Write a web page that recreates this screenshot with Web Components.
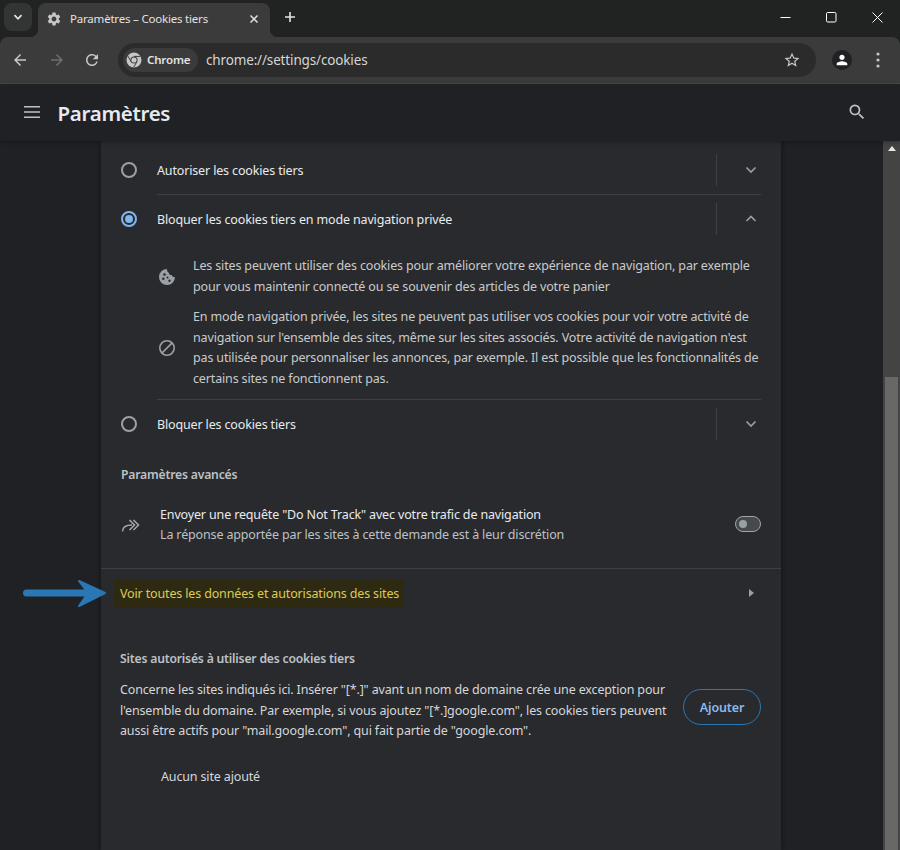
<!DOCTYPE html>
<html lang="fr">
<head>
<meta charset="utf-8">
<title>Paramètres – Cookies tiers</title>
<style>
    html, body {
        margin: 0;
        height: 850px;
        overflow: hidden;
        background: #202124;
        font-family: "Noto Sans", "Open Sans", sans-serif;
        font-size: 12.5px;
        letter-spacing: -0.15px;
    }
    body { display: flex; flex-direction: column; }
    settings-page { flex: 1; min-height: 0; }
</style>
</head>
<body>
<browser-tabstrip></browser-tabstrip>
<browser-toolbar></browser-toolbar>
<settings-header></settings-header>
<settings-page>
    <cookie-option label="Autoriser les cookies tiers"></cookie-option>
    <cookie-option label="Bloquer les cookies tiers en mode navigation privée" checked open>
        <info-row icon="cookie">Les sites peuvent utiliser des cookies pour améliorer votre expérience de navigation, par exemple pour vous maintenir connecté ou se souvenir des articles de votre panier</info-row>
        <info-row icon="block">En mode navigation privée, les sites ne peuvent pas utiliser vos cookies pour voir votre activité de navigation sur l'ensemble des sites, même sur les sites associés. Votre activité de navigation n'est pas utilisée pour personnaliser les annonces, par exemple. Il est possible que les fonctionnalités de certains sites ne fonctionnent pas.</info-row>
    </cookie-option>
    <cookie-option label="Bloquer les cookies tiers" last></cookie-option>
    <section-title style="margin-top:14.6px">Paramètres avancés</section-title>
    <dnt-row></dnt-row>
    <site-data-link></site-data-link>
    <allowed-sites></allowed-sites>
</settings-page>

<script>
const ICONS = {
    gear: 'M19.14 12.94c.04-.3.06-.61.06-.94 0-.32-.02-.64-.07-.94l2.03-1.58c.18-.14.23-.41.12-.61l-1.92-3.32c-.12-.22-.37-.29-.59-.22l-2.39.96c-.5-.38-1.03-.7-1.62-.94l-.36-2.54c-.04-.24-.24-.41-.48-.41h-3.84c-.24 0-.43.17-.47.41l-.36 2.54c-.59.24-1.13.57-1.62.94l-2.39-.96c-.22-.08-.47 0-.59.22L2.74 8.87c-.12.21-.08.47.12.61l2.03 1.58c-.05.3-.09.63-.09.94s.02.64.07.94l-2.03 1.58c-.18.14-.23.41-.12.61l1.92 3.32c.12.22.37.29.59.22l2.39-.96c.5.38 1.03.7 1.62.94l.36 2.54c.05.24.24.41.48.41h3.84c.24 0 .44-.17.47-.41l.36-2.54c.59-.24 1.13-.56 1.62-.94l2.39.96c.22.08.47 0 .59-.22l1.92-3.32c.12-.22.07-.47-.12-.61l-2.01-1.58zM12 15.6c-1.98 0-3.6-1.62-3.6-3.6s1.62-3.6 3.6-3.6 3.6 1.62 3.6 3.6-1.62 3.6-3.6 3.6z',
    search: 'M15.5 14h-.79l-.28-.27A6.471 6.471 0 0 0 16 9.5 6.5 6.5 0 1 0 9.5 16c1.61 0 3.09-.59 4.23-1.57l.27.28v.79l5 4.99L20.49 19l-4.99-5zm-6 0C7.01 14 5 11.99 5 9.5S7.01 5 9.5 5 14 7.01 14 9.5 11.99 14 9.5 14z',
    star: 'M22 9.24l-7.19-.62L12 2 9.19 8.63 2 9.24l5.46 4.73L5.82 21 12 17.27 18.18 21l-1.63-7.03L22 9.24zM12 15.4l-3.76 2.27 1-4.28-3.32-2.88 4.38-.38L12 6.1l1.71 4.04 4.38.38-3.32 2.88 1 4.28L12 15.4z',
    person: 'M12 12c2.21 0 4-1.79 4-4s-1.79-4-4-4-4 1.79-4 4 1.79 4 4 4zm0 2c-2.67 0-8 1.34-8 4v2h16v-2c0-2.66-5.33-4-8-4z',
    reload: 'M17.65 6.35A7.958 7.958 0 0 0 12 4c-4.42 0-7.99 3.58-7.99 8s3.57 8 7.99 8c3.73 0 6.84-2.55 7.73-6h-2.08A5.99 5.99 0 0 1 12 18c-3.31 0-6-2.69-6-6s2.69-6 6-6c1.66 0 3.14.69 4.22 1.78L13 11h7V4l-2.35 2.35z',
    arrow: 'M20 11H7.83l5.59-5.59L12 4l-8 8 8 8 1.41-1.41L7.83 13H20v-2z'
};

function icon(name, size, color, extra = '') {
    return `<svg width="${size}" height="${size}" viewBox="0 0 24 24" fill="${color}" style="display:block;flex:none;${extra}"><path d="${ICONS[name]}"/></svg>`;
}

class BrowserTabstrip extends HTMLElement {
    constructor() {
        super();
        this.attachShadow({ mode: 'open' });
        this.shadowRoot.innerHTML = `
            <style>
                :host { display: flex; height: 37px; background: #212322; padding-left: 4px; box-sizing: border-box; flex: none; }
                #list {
                    width: 28px; height: 28px; margin-top: 3px; border-radius: 8px; background: #333534;
                    display: flex; align-items: center; justify-content: center;
                }
                #tab {
                    position: relative; width: 232px; height: 34px; margin: 3px 0 0 6px; background: #3b3b3b;
                    border-radius: 8px 8px 0 0; display: flex; align-items: center; box-sizing: border-box;
                    padding: 0 11px 3px 8px; color: #e3e3e3; font-size: 11.5px; letter-spacing: -0.2px;
                }
                #tab::before, #tab::after { content: ''; position: absolute; bottom: 0; width: 8px; height: 8px; }
                #tab::before { left: -8px; background: radial-gradient(circle at 0 0, transparent 8px, #3b3b3b 8.5px); }
                #tab::after { right: -8px; background: radial-gradient(circle at 100% 0, transparent 8px, #3b3b3b 8.5px); }
                #title { margin-left: 8px; flex: 1; white-space: nowrap; }
                #plus { margin: 10px 0 0 13px; height: 14px; }
                #win { margin-left: auto; display: flex; }
                #win span { width: 46px; height: 34px; display: flex; align-items: center; justify-content: center; }
            </style>
            <div id="list">
                <svg width="10" height="10" viewBox="0 0 10 10" fill="none" stroke="#e3e3e3" stroke-width="1.7"><path d="M1.5 3.2 5 6.8l3.5-3.6"/></svg>
            </div>
            <div id="tab">
                ${icon('gear', 16, '#c7c7c7')}
                <span id="title">Paramètres – Cookies tiers</span>
                <svg width="10" height="10" viewBox="0 0 10 10" stroke="#e3e3e3" stroke-width="1.5"><path d="M1.5 1.5l7 7M8.5 1.5l-7 7"/></svg>
            </div>
            <svg id="plus" width="14" height="14" viewBox="0 0 14 14" stroke="#e3e3e3" stroke-width="1.6"><path d="M7 2v10M2 7h10"/></svg>
            <div id="win">
                <span><svg width="11" height="11" viewBox="0 0 11 11" stroke="#fff"><path d="M.5 5.5h10"/></svg></span>
                <span><svg width="11" height="11" viewBox="0 0 11 11" fill="none" stroke="#fff"><rect x=".5" y=".5" width="9.5" height="9.5" rx="1.2"/></svg></span>
                <span><svg width="11" height="11" viewBox="0 0 11 11" stroke="#fff"><path d="M.5.5l10 10M10.5.5l-10 10"/></svg></span>
            </div>
        `;
    }
}
customElements.define('browser-tabstrip', BrowserTabstrip);

class BrowserToolbar extends HTMLElement {
    constructor() {
        super();
        this.attachShadow({ mode: 'open' });
        this.shadowRoot.innerHTML = `
            <style>
                :host {
                    display: flex; align-items: center; height: 47px; box-sizing: border-box; flex: none;
                    background: #3b3b3b; border-bottom: 1px solid #4b4b4b; border-radius: 8px 8px 0 0; padding: 0 0 1px 11px;
                }
                #omni {
                    width: 698px; height: 34px; margin-left: 17px; border-radius: 17px; background: #2b2b2b;
                    display: flex; align-items: center; box-sizing: border-box; padding: 0 15px 0 5px;
                    color: #d5d5d5; font-size: 13.5px;
                }
                #chip {
                    width: 75px; height: 24px; border-radius: 12px; background: #3b3b3b; display: flex; align-items: center;
                    box-sizing: border-box; padding-left: 3px; gap: 5px; color: #e3e3e3; font-size: 11.5px; font-weight: 600;
                }
                #url { margin-left: 8px; flex: 1; }
                #avatar {
                    width: 20px; height: 20px; border-radius: 50%; background: #202124; margin-left: 16px;
                    display: flex; align-items: center; justify-content: center;
                }
                #dots { margin-left: 24px; }
            </style>
            ${icon('arrow', 18, '#c7c7c7')}
            ${icon('arrow', 18, '#6f6f6f', 'transform:scaleX(-1);margin-left:19px')}
            ${icon('reload', 18, '#c7c7c7', 'margin-left:17px')}
            <div id="omni">
                <div id="chip">
                    <svg width="16" height="16" viewBox="0 0 16 16" style="flex:none">
                        <circle cx="8" cy="8" r="7.5" fill="#c7c7c7"/>
                        <path d="M8 4.4h6.4M10.9 9.7l-3.2 5.6M5.1 9.7 1.9 4.1" stroke="#3b3b3b" stroke-width="1"/>
                        <circle cx="8" cy="8" r="3.6" fill="#3b3b3b"/>
                        <circle cx="8" cy="8" r="2.6" fill="#c7c7c7"/>
                    </svg>
                    <span>Chrome</span>
                </div>
                <span id="url">chrome://settings/cookies</span>
                ${icon('star', 18, '#c7c7c7')}
            </div>
            <div id="avatar">${icon('person', 16, '#fff')}</div>
            <svg id="dots" width="4" height="16" viewBox="0 0 4 16" fill="#c7c7c7"><circle cx="2" cy="2" r="1.6"/><circle cx="2" cy="8" r="1.6"/><circle cx="2" cy="14" r="1.6"/></svg>
        `;
    }
}
customElements.define('browser-toolbar', BrowserToolbar);

class SettingsHeader extends HTMLElement {
    constructor() {
        super();
        this.attachShadow({ mode: 'open' });
        this.shadowRoot.innerHTML = `
            <style>
                :host {
                    display: flex; align-items: center; height: 57px; background: #202124; box-sizing: border-box; flex: none;
                    padding: 0 33px 1px 24px; position: relative; z-index: 1; box-shadow: 0 1px 4px rgba(0,0,0,.35);
                }
                h1 { margin: 2px 0 0 17.5px; font-size: 20.5px; font-weight: 600; letter-spacing: -0.3px; color: #e8eaed; flex: 1; }
            </style>
            <svg width="16" height="12" viewBox="0 0 16 12" fill="#bdc1c6"><path d="M0 0h16v1.6H0zM0 5.2h16v1.6H0zM0 10.4h16V12H0z"/></svg>
            <h1>Paramètres</h1>
            ${icon('search', 20, '#bdc1c6')}
        `;
    }
}
customElements.define('settings-header', SettingsHeader);

class SettingsPage extends HTMLElement {
    constructor() {
        super();
        this.attachShadow({ mode: 'open' });
        this.shadowRoot.innerHTML = `
            <style>
                :host { display: flex; background: #202124; height: 100%; overflow: hidden; }
                #main { flex: 1; padding-left: 101px; min-width: 0; }
                #card {
                    width: 680px; height: 100%; box-sizing: border-box; background: #292a2d; padding-top: 5px;
                    box-shadow: 0 0 5px rgba(0,0,0,.45);
                }
                #bar { width: 17px; background: #444; position: relative; flex: none; display: flex; flex-direction: column; align-items: center; }
                #up { margin-top: 5px; width: 0; height: 0; border: 4px solid transparent; border-top: 0; border-bottom: 5px solid #e8e8e8; }
                #thumb { width: 13px; margin-top: 226px; flex: 1; background: #686868; }
            </style>
            <div id="main"><div id="card"><slot></slot></div></div>
            <div id="bar"><div id="up"></div><div id="thumb"></div></div>
        `;
    }
}
customElements.define('settings-page', SettingsPage);

class CookieOption extends HTMLElement {
    constructor() {
        super();
        this.attachShadow({ mode: 'open' });
        const checked = this.hasAttribute('checked');
        const open = this.hasAttribute('open');
        const chevron = open ? 'M1.5 7 6 2.5 10.5 7' : 'M1.5 2.5 6 7l4.5-4.5';
        this.shadowRoot.innerHTML = `
            <style>
                :host { display: block; padding: 0 20px; }
                #row { display: flex; align-items: center; height: 48px; }
                #radio {
                    width: 16px; height: 16px; border-radius: 50%; box-sizing: border-box;
                    border: 2px solid ${checked ? '#7fb6ee' : '#9aa0a6'}; flex: none; display: flex; align-items: center; justify-content: center;
                }
                #radio i { width: 8px; height: 8px; border-radius: 50%; background: #7fb6ee; display: ${checked ? 'block' : 'none'}; }
                #label { flex: 1; margin-left: 20px; color: #e8eaed; }
                #sep { width: 1px; height: 32px; background: #3f4043; }
                #toggle { width: 44px; display: flex; justify-content: flex-end; padding-right: 4px; box-sizing: border-box; }
                #details { padding: 13px 0 0.2px 37px; }
                #line { height: 1px; margin-left: 36px; background: #3f4043; display: ${this.hasAttribute('last') ? 'none' : 'block'}; }
            </style>
            <div id="row">
                <div id="radio"><i></i></div>
                <div id="label">${this.getAttribute('label')}</div>
                <div id="sep"></div>
                <div id="toggle"><svg width="12" height="10" viewBox="0 0 12 10" fill="none" stroke="#9aa0a6" stroke-width="1.6"><path d="${chevron}"/></svg></div>
            </div>
            ${open ? '<div id="details"><slot></slot></div>' : ''}
            <div id="line"></div>
        `;
    }
}
customElements.define('cookie-option', CookieOption);

class InfoRow extends HTMLElement {
    constructor() {
        super();
        this.attachShadow({ mode: 'open' });
        const art = this.getAttribute('icon') === 'cookie'
            ? `<svg width="18" height="18" viewBox="0 0 18 18"><path fill="#9aa0a6" d="M9 1a8 8 0 1 0 8 8c-1.6.3-2.9-.5-3.2-2-1.500.3-2.900-.7-2.900-2.300C9.700 4.500 8.900 3 9 1z"/><circle cx="6.500" cy="6.500" r="1.300" fill="#292a2d"/><circle cx="5.300" cy="10.800" r="1.200" fill="#292a2d"/><circle cx="9.500" cy="9.500" r="1" fill="#292a2d"/><circle cx="11.500" cy="12.800" r="1.200" fill="#292a2d"/></svg>`
            : `<svg width="18" height="18" viewBox="0 0 18 18" fill="none" stroke="#9aa0a6" stroke-width="1.600"><circle cx="9" cy="9" r="7.200"/><path d="M3.900 14.100 14.100 3.900"/></svg>`;
        this.shadowRoot.innerHTML = `
            <style>
                :host { display: flex; align-items: center; color: #c8cacc; line-height: 20.5px; padding-bottom: 10px; }
                #ic { width: 18px; flex: none; margin: 0 17px 0 0; }
                #ic svg { display: block; }
            </style>
            <div id="ic">${art}</div>
            <div><slot></slot></div>
        `;
    }
}
customElements.define('info-row', InfoRow);

class SectionTitle extends HTMLElement {
    constructor() {
        super();
        this.attachShadow({ mode: 'open' });
        this.shadowRoot.innerHTML = `
            <style>
                :host { display: block; padding: 0 20px; color: #bdc1c6; font-weight: 600; line-height: 24px; font-size: 12.2px; letter-spacing: -0.2px; }
            </style>
            <slot></slot>
        `;
    }
}
customElements.define('section-title', SectionTitle);

class DntRow extends HTMLElement {
    constructor() {
        super();
        this.attachShadow({ mode: 'open' });
        this.shadowRoot.innerHTML = `
            <style>
                :host { display: flex; align-items: center; padding: 0 20px; border-bottom: 1px solid #3f4043; box-sizing: border-box; height: 82px; }
                svg { flex: none; margin-right: 20px; }
                #text { flex: 1; line-height: 20px; margin-top: -4px; }
                #a { color: #e8eaed; }
                #b { color: #bdc1c6; }
                #toggle { width: 26px; height: 16px; border-radius: 8px; border: 1px solid #a0a3a3; background: #474a4c; box-sizing: border-box; position: relative; margin-top: -7px; }
                #toggle i { position: absolute; left: 3px; top: 3px; width: 8px; height: 8px; border-radius: 50%; background: #9aa0a6; }
            </style>
            <svg width="19" height="14" viewBox="0 0 19 14" fill="none" stroke="#a4a8ac" stroke-width="1.5" style="margin-top:-4px"><path d="M1.500 13.500C1.500 9.500 5 7 11 7"/><path d="M8.500 2 13.500 7 8.500 12M12.500 2 17.500 7 12.500 12"/></svg>
            <div id="text">
                <div id="a">Envoyer une requête "Do Not Track" avec votre trafic de navigation</div>
                <div id="b">La réponse apportée par les sites à cette demande est à leur discrétion</div>
            </div>
            <div id="toggle"><i></i></div>
        `;
    }
}
customElements.define('dnt-row', DntRow);

class SiteDataLink extends HTMLElement {
    constructor() {
        super();
        this.attachShadow({ mode: 'open' });
        this.shadowRoot.innerHTML = `
            <style>
                :host { display: flex; align-items: center; height: 48px; padding: 0 27px 0 13px; position: relative; }
                #mark { background: #2e2a12; color: #dccb55; height: 28px; line-height: 30px; padding: 0 5px 0 6px; }
                #tri { margin-left: auto; width: 0; height: 0; border: 4px solid transparent; border-left: 5px solid #9aa0a6; border-right: 0; }
                svg { position: absolute; left: -79px; top: 9px; }
            </style>
            <svg width="86" height="30" viewBox="0 0 86 30" fill="none" stroke="#2a77b5" stroke-linecap="round" stroke-linejoin="round"><path d="M4.500 15H76" stroke-width="7"/><path d="M57 3 83 15 57 28 66 15z" fill="#2a77b5" stroke-width="2"/></svg>
            <div id="mark">Voir toutes les données et autorisations des sites</div>
            <div id="tri"></div>
        `;
    }
}
customElements.define('site-data-link', SiteDataLink);

class AllowedSites extends HTMLElement {
    constructor() {
        super();
        this.attachShadow({ mode: 'open' });
        this.shadowRoot.innerHTML = `
            <style>
                :host { display: block; padding: 30px 20px 0 19px; }
                #title { color: #bdc1c6; font-weight: 600; line-height: 24px; font-size: 12.2px; letter-spacing: -0.2px; }
                #body { display: flex; align-items: center; margin-top: 9.5px; }
                p { margin: 0; flex: 1; color: #d5d7da; line-height: 20.500px; }
                button {
                    width: 78px; height: 36px; margin: -8px 0 0 13px; border-radius: 18px; background: none; border: 1px solid #2a77b5;
                    color: #8ab9ee; font: inherit; font-weight: 600; flex: none; letter-spacing: inherit; padding: 0;
                }
                #none { margin: 25.5px 0 0 41px; color: #d5d7da; line-height: 20px; }
            </style>
            <div id="title">Sites autorisés à utiliser des cookies tiers</div>
            <div id="body">
                <p>Concerne les sites indiqués ici. Insérer "[*.]" avant un nom de domaine crée une exception pour l'ensemble du domaine. Par exemple, si vous ajoutez "[*.]google.com", les cookies tiers peuvent aussi être actifs pour "mail.google.com", qui fait partie de "google.com".</p>
                <button>Ajouter</button>
            </div>
            <div id="none">Aucun site ajouté</div>
        `;
    }
}
customElements.define('allowed-sites', AllowedSites);
</script>
</body>
</html>
